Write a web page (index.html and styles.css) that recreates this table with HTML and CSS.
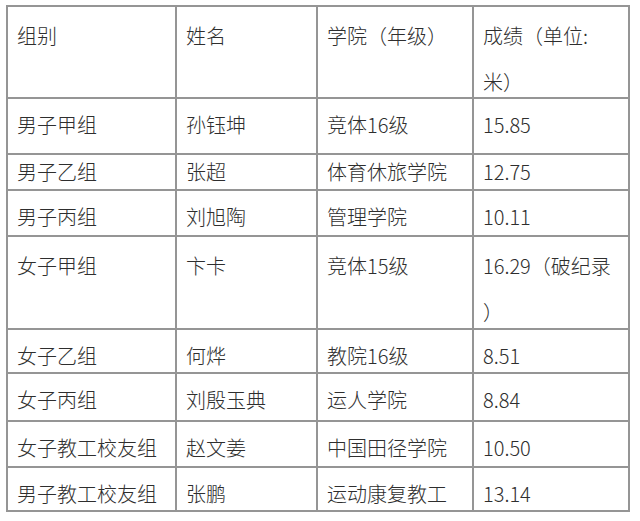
FILE: index.html
```html
<!DOCTYPE html>
<html lang="zh-CN">
<head>
<meta charset="utf-8">
<link rel="stylesheet" href="styles.css">
</head>
<body>
<table class="results">
  <colgroup>
    <col class="c1"><col class="c2"><col class="c3"><col class="c4">
  </colgroup>
  <tr class="h92 wrap"><td>组别</td><td>姓名</td><td>学院（年级）</td><td><span class="ln">成绩（单位:</span><span class="ln">米）</span></td></tr>
  <tr class="h56"><td>男子甲组</td><td>孙钰坤</td><td>竞体16级</td><td>15.85</td></tr>
  <tr class="h36 tight"><td>男子乙组</td><td>张超</td><td>体育休旅学院</td><td>12.75</td></tr>
  <tr class="h46"><td>男子丙组</td><td>刘旭陶</td><td>管理学院</td><td>10.11</td></tr>
  <tr class="h93 wrap"><td>女子甲组</td><td>卞卡</td><td>竞体15级</td><td><span class="ln">16.29（破纪录</span><span class="ln">）</span></td></tr>
  <tr class="h44"><td>女子乙组</td><td>何烨</td><td>教院16级</td><td>8.51</td></tr>
  <tr class="h48"><td>女子丙组</td><td>刘殷玉典</td><td>运人学院</td><td>8.84</td></tr>
  <tr class="h46"><td>女子教工校友组</td><td>赵文姜</td><td>中国田径学院</td><td>10.50</td></tr>
  <tr class="h44"><td>男子教工校友组</td><td>张鹏</td><td>运动康复教工</td><td>13.14</td></tr>
</table>
</body>
</html>
```
FILE: styles.css
```css
html, body {
  margin: 0;
  padding: 0;
  background: #ffffff;
}
body {
  padding: 5px 0 0 6px;
  font-family: "Noto Sans CJK SC", "Noto Sans", sans-serif;
  font-weight: 300;
  color: #2e2e2e;
}
.results {
  border-collapse: collapse;
  table-layout: fixed;
  width: 622px;
}
.c1 { width: 169px; }
.c2 { width: 141px; }
.c3 { width: 156px; }
.c4 { width: 156px; }
.results td {
  border: 2px solid #959595;
  padding: 14px 9px 0 9px;
  font-size: 20px;
  line-height: 24px;
  vertical-align: top;
  white-space: nowrap;
  overflow: hidden;
}
.results .tight td {
  padding-top: 5px;
}
.results .wrap td {
  padding-top: 17px;
}
.ln {
  display: block;
}
.ln + .ln {
  margin-top: 22px;
}
.h92 { height: 92px; }
.h93 { height: 93px; }
.h56 { height: 56px; }
.h36 { height: 36px; }
.h46 { height: 46px; }
.h44 { height: 44px; }
.h48 { height: 48px; }
```
